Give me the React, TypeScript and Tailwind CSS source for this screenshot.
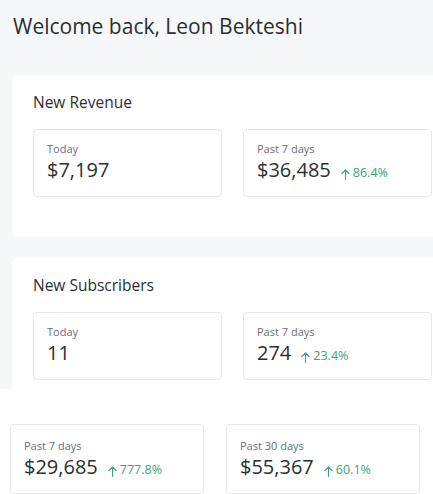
import React from 'react';

interface Stat {
  label: string;
  value: string;
  change?: string;
}

const revenue: Stat[] = [
  { label: 'Today', value: '$7,197' },
  { label: 'Past 7 days', value: '$36,485', change: '86.4%' },
];

const subscribers: Stat[] = [
  { label: 'Today', value: '11' },
  { label: 'Past 7 days', value: '274', change: '23.4%' },
];

const totals: Stat[] = [
  { label: 'Past 7 days', value: '$29,685', change: '777.8%' },
  { label: 'Past 30 days', value: '$55,367', change: '60.1%' },
];

function UpArrow() {
  return (
    <svg width="9" height="11" viewBox="0 0 9 11" fill="none" className="mr-[3px]">
      <path d="M4.5 10.5V1M1 4.5l3.5-3.5 3.5 3.5" stroke="currentColor" strokeWidth="1.1" strokeLinecap="round" strokeLinejoin="round" />
    </svg>
  );
}

function StatCard({ stat, pt = 'pt-[12px]' }: { stat: Stat; pt?: string }) {
  return (
    <div className={`border border-[#e6e8eb] rounded-[4px] bg-white px-[13px] ${pt} pb-[12px]`}>
      <div className="text-[11px] leading-[14px] text-[#6a6e73]">{stat.label}</div>
      <div className="flex items-baseline">
        <span className="text-[20px] leading-[28px] text-[#2b2f33]">{stat.value}</span>
        {stat.change && (
          <span className="ml-[10px] flex items-baseline text-[12.5px] text-[#3aa578]">
            <span className="self-center mt-[3px]"><UpArrow /></span>
            {stat.change}
          </span>
        )}
      </div>
    </div>
  );
}

function Section({ title, stats, pb }: { title: string; stats: Stat[]; pb: string }) {
  return (
    <div className={`w-[441px] bg-white rounded-[6px] px-[21px] pt-[17px] ${pb}`}>
      <h2 className="text-[15.5px] leading-[20px] text-[#2b2f33]">{title}</h2>
      <div className="grid grid-cols-2 gap-[21px] mt-[17px]">
        {stats.map((s) => (
          <StatCard key={s.label} stat={s} />
        ))}
      </div>
    </div>
  );
}

export default function App() {
  return (
    <div className="w-[433px] h-[494px] overflow-hidden bg-white" style={{ fontFamily: '"Open Sans", "Noto Sans", sans-serif' }}>
      {/* Dashboard */}
      <div className="h-[389px] overflow-hidden bg-[#f6f7f9] pl-[12px] pt-[12px]">
        <h1 className="text-[21px] leading-[28px] text-[#2b2f33] pl-[1px]">Welcome back, Leon Bekteshi</h1>
        <div className="mt-[35px] flex flex-col gap-[20px]">
          <Section title="New Revenue" stats={revenue} pb="pb-[40px]" />
          <div className="pt-[1px]">
            <Section title="New Subscribers" stats={subscribers} pb="pb-[40px]" />
          </div>
        </div>
      </div>

      {/* Totals */}
      <div className="pl-[10px] pt-[35px] flex gap-[22px]">
        {totals.map((s) => (
          <div key={s.label} className="w-[194px]">
            <StatCard stat={s} pt="pt-[14px]" />
          </div>
        ))}
      </div>
    </div>
  );
}
